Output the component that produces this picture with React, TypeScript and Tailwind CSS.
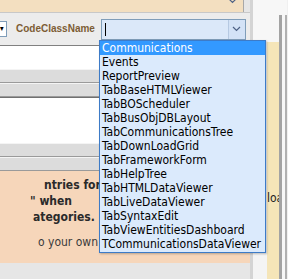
import React from 'react';

const items = [
  'Communications',
  'Events',
  'ReportPreview',
  'TabBaseHTMLViewer',
  'TabBOScheduler',
  'TabBusObjDBLayout',
  'TabCommunicationsTree',
  'TabDownLoadGrid',
  'TabFrameworkForm',
  'TabHelpTree',
  'TabHTMLDataViewer',
  'TabLiveDataViewer',
  'TabSyntaxEdit',
  'TabViewEntitiesDashboard',
  'TCommunicationsDataViewer',
];

const Chevron = ({ className }: { className?: string }) => (
  <svg width="9" height="6" viewBox="0 0 9 6" className={className}>
    <path d="M1 1 L4.5 4.5 L8 1" fill="none" stroke="#4d6185" strokeWidth="1.2" />
  </svg>
);

const GrayBar = () => (
  <div className="h-[14px] bg-[#dcdcdc] border-t border-t-[#f4f4f4] border-b border-b-[#9a9a9a]" />
);

const App: React.FC = () => {
  return (
    <div
      className="relative w-[288px] h-[279px] overflow-hidden bg-[#f0f0f0] flex"
      style={{ fontFamily: '"DejaVu Sans Condensed", "Liberation Sans", sans-serif' }}
    >
      {/* main window */}
      <div className="w-[253px] flex flex-col border-r-[3px] border-r-[#d4d4d4]">
        <div className="h-[13px] flex border-b border-b-[#c8c8c8]">
          <div className="w-[244px] bg-[#f3dfc0] flex justify-end items-start pr-[6px] border-r border-r-[#a8a8a8]">
            <Chevron className="-mt-[2px]" />
          </div>
          <div className="flex-1 bg-[#e6e6e6]" />
        </div>

        <div className="h-[33px] bg-[#ececec] flex items-center border-b border-b-[#808080]">
          <div className="w-[7px] h-[16px] bg-white border-r border-y border-[#7f9db9] flex items-center">
            <span className="text-[8px] leading-none text-black">▾</span>
          </div>
          <span className="ml-[9px] text-[10px] font-bold text-[#7d5d34] leading-none" style={{ fontFamily: '"Liberation Sans", sans-serif' }}>
            CodeClassName
          </span>
          <div className="ml-[6px] w-[145px] h-[21px] bg-[#dbe8f9] border border-[#7f9db9] flex items-center">
            <div className="ml-[3px] w-px h-[13px] bg-black" />
            <div className="ml-auto w-[17px] h-full border-l border-l-[#b6c9e2] bg-[#d3e2f6] flex items-center justify-center">
              <Chevron />
            </div>
          </div>
        </div>

        <div className="h-[23px] bg-white" />
        <GrayBar />
        <GrayBar />
        <div className="h-[46px] bg-white border-t border-t-[#707070]" />
        <GrayBar />
        <GrayBar />

        <div className="h-[92px] bg-[#f6d6ba] text-[12px] leading-[16px] text-[#2a2a2a] pt-[6px]">
          <div className="pl-[44px] font-bold">ntries for</div>
          <div className="pl-[30px] font-bold">" when</div>
          <div className="pl-[33px] font-bold">ategories.</div>
          <div className="pl-[38px] mt-[9px] text-[#3a3a3a]">o your own</div>
        </div>
        <div className="flex-1 bg-[#e6e6e6]" />
      </div>

      {/* window behind on the right */}
      <div className="flex-1 flex">
        <div className="w-[26px] flex flex-col">
          <div className="h-[42px] bg-[#f7f7f7]" />
          <div className="flex-1 flex">
            <div className="w-[14px] bg-[#f4f4f4]" />
            <div className="flex-1 bg-[#f5e5b8] text-[12px] pt-[147px] overflow-hidden whitespace-nowrap text-[#222]">
              loa
            </div>
          </div>
        </div>
        <div className="w-[3px] flex flex-col">
          <div className="h-[15px] bg-[#f7f7f7]" />
          <div className="flex-1 bg-[#a3a3a3]" />
        </div>
        <div className="w-[3px] bg-[#f7f7f7]" />
        <div className="w-[2px] flex flex-col">
          <div className="h-[15px] bg-[#f7f7f7]" />
          <div className="flex-1 bg-[#b0b0b0]" />
        </div>
        <div className="flex-1 bg-[#f0f0f0]" />
      </div>

      {/* open dropdown list */}
      <div className="absolute left-[99px] top-[40px] w-[167px] h-[213px] bg-[#dbeafc] border border-[#3d7bc7] shadow-[1px_1px_2px_rgba(0,0,0,0.25)] text-[12px] leading-[14px] text-black">
        {items.map((it, i) => (
          <div
            key={it}
            className={`h-[14px] pl-[2px] whitespace-nowrap ${i === 0 ? 'bg-[#3399ff] text-white' : ''}`}
          >
            {it}
          </div>
        ))}
      </div>
    </div>
  );
};

export default App;
